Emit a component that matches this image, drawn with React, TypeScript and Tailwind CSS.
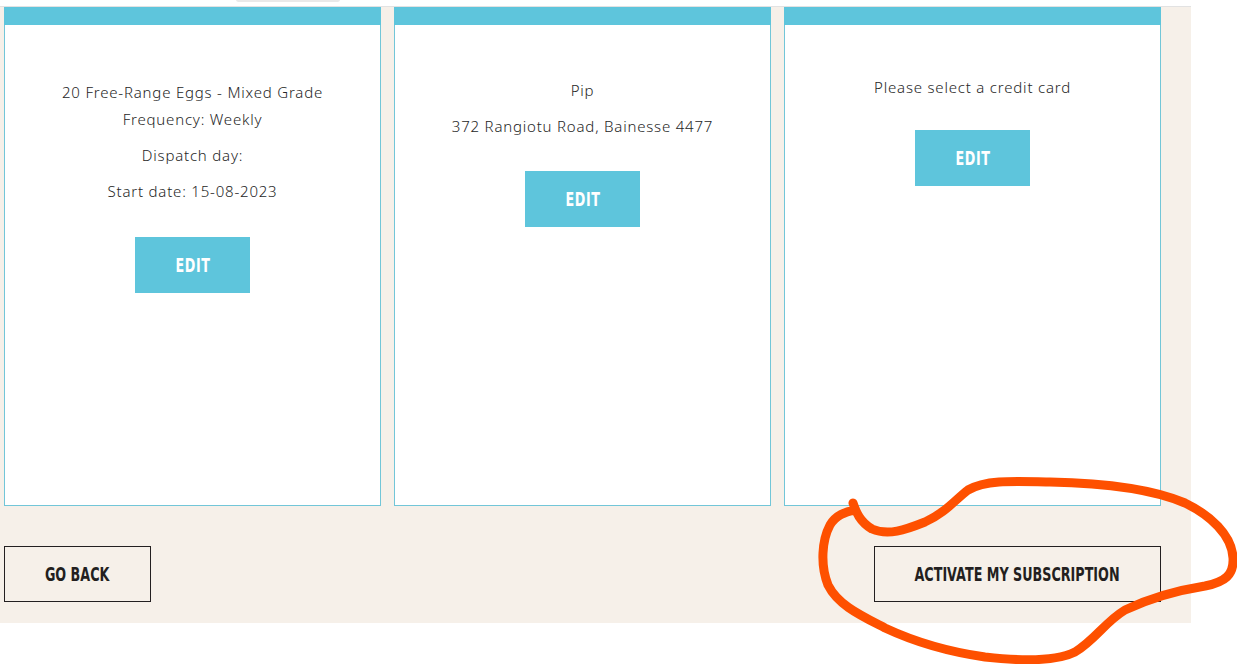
import React from 'react';

const cards = [
  {
    pad: 'pt-[54px]',
    lines: [
      { text: '20 Free-Range Eggs - Mixed Grade', cls: 'leading-[27px]' },
      { text: 'Frequency: Weekly', cls: 'leading-[27px]' },
      { text: 'Dispatch day:', cls: 'leading-[27px] mt-[9px]' },
      { text: 'Start date: 15-08-2023', cls: 'leading-[27px] mt-[9px]' },
    ],
    btn: 'mt-[32px]',
  },
  {
    pad: 'pt-[52px]',
    lines: [
      { text: 'Pip', cls: 'leading-[27px]' },
      { text: '372 Rangiotu Road, Bainesse 4477', cls: 'leading-[27px] mt-[9px]' },
    ],
    btn: 'mt-[31px]',
  },
  {
    pad: 'pt-[49px]',
    lines: [{ text: 'Please select a credit card', cls: 'leading-[27px]' }],
    btn: 'mt-[29px]',
  },
];

const bodyFont = { fontFamily: '"Noto Sans", "Open Sans", sans-serif' };
const btnFont = { fontFamily: '"DejaVu Sans", "Liberation Sans", sans-serif' };

// condensed heavy label used on all buttons
const Label = ({ children }: { children: React.ReactNode }) => (
  <span className="inline-block shrink-0 scale-x-[0.67] text-[19px] font-bold whitespace-nowrap" style={btnFont}>
    {children}
  </span>
);

const App = () => {
  return (
    <div className="relative w-[1237px] h-[664px] bg-white overflow-hidden">
      <div className="w-[1191px] h-[7px] border-b border-[#e2e2e2] relative">
        <div className="absolute left-[236px] top-[-3px] w-[104px] h-[5px] rounded-full bg-[#e9e9e9]" />
      </div>

      <div className="w-[1191px] bg-[#f6f0e9] pl-[4px] pr-[30px] pb-[21px]">
        <div className="grid grid-cols-3 gap-[13px]">
          {cards.map((card, i) => (
            <div key={i} className="h-[499px] bg-white border border-t-0 border-[#72c6d8] flex flex-col">
              <div className="h-[18px] bg-[#5ec5dc] -mx-px" />
              <div
                className={`flex flex-col items-center text-center text-[15px] font-light text-[#262626] tracking-[0.8px] ${card.pad}`}
                style={bodyFont}
              >
                {card.lines.map((l, j) => (
                  <p key={j} className={l.cls}>{l.text}</p>
                ))}
                <button className={`w-[115px] h-[56px] bg-[#5ec5dc] text-white flex items-center justify-center ${card.btn}`}>
                  <Label>EDIT</Label>
                </button>
              </div>
            </div>
          ))}
        </div>

        <div className="flex justify-between mt-[40px]">
          <button className="w-[147px] h-[56px] border border-[#231f20] text-[#231f20] flex items-center justify-center">
            <Label>GO BACK</Label>
          </button>
          <button className="w-[287px] h-[56px] border border-[#231f20] text-[#231f20] flex items-center justify-center">
            <Label>ACTIVATE MY SUBSCRIPTION</Label>
          </button>
        </div>
      </div>

      {/* hand-drawn highlight */}
      <svg className="absolute left-0 top-0 pointer-events-none" width="1237" height="664">
        <path
          d="M853 503 C856 512 860 522 872 529 C888 536 905 530 925 522 C945 513 955 500 968 490 C985 480 1010 481 1050 482 C1100 483 1150 488 1185 503 C1210 515 1232 535 1233 558 C1234 575 1225 582 1205 586 C1180 590 1150 598 1125 610 C1105 622 1095 640 1075 652 C1055 662 1020 661 985 657 C950 652 915 642 885 628 C860 615 838 605 828 585 C820 565 822 540 830 525 C836 515 845 512 855 510"
          fill="none"
          stroke="#fe5000"
          strokeWidth="9"
          strokeLinecap="round"
          strokeLinejoin="round"
        />
      </svg>
    </div>
  );
};

export default App;
